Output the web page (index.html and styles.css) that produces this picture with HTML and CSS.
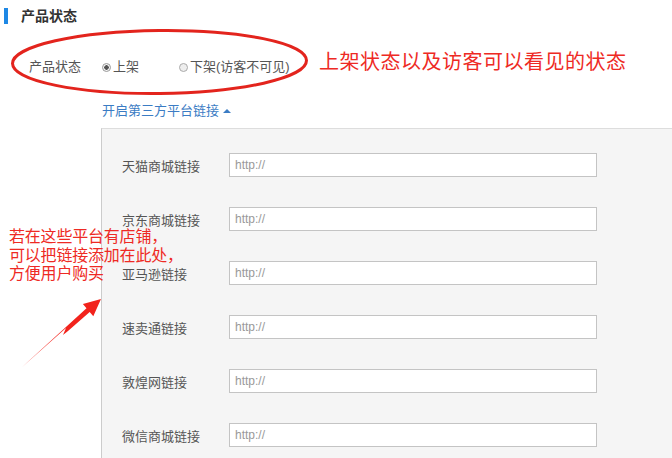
FILE: index.html
```html
<!DOCTYPE html>
<html lang="zh-CN">
<head>
    <meta charset="UTF-8">
    <title>产品状态</title>
    <link rel="stylesheet" href="styles.css">
</head>
<body>
    <div class="page">
        <h2 class="section-title">产品状态</h2>

        <div class="status-row">
            <span class="row-label">产品状态</span>
            <label class="radio"><input type="radio" name="status" checked>上架</label>
            <label class="radio"><input type="radio" name="status">下架(访客不可见)</label>
        </div>

        <a class="toggle" href="#links">开启第三方平台链接 <span class="caret"></span></a>

        <div class="panel" id="links">
            <div class="link-row"><span class="link-label">天猫商城链接</span><input type="text" placeholder="http://"></div>
            <div class="link-row"><span class="link-label">京东商城链接</span><input type="text" placeholder="http://"></div>
            <div class="link-row"><span class="link-label">亚马逊链接</span><input type="text" placeholder="http://"></div>
            <div class="link-row"><span class="link-label">速卖通链接</span><input type="text" placeholder="http://"></div>
            <div class="link-row"><span class="link-label">敦煌网链接</span><input type="text" placeholder="http://"></div>
            <div class="link-row"><span class="link-label">微信商城链接</span><input type="text" placeholder="http://"></div>
        </div>

        <!-- hand-drawn annotations on top of the form -->
        <svg class="marks" width="672" height="458" viewBox="0 0 672 458">
            <ellipse cx="159.5" cy="62" rx="147" ry="31.5" fill="none" stroke="#e3241d" stroke-width="3" transform="rotate(-0.6 159.5 62)"/>
            <polygon fill="#f2231c" points="21,368 86.5,308.2 82.9,304 101,299 93.3,316.2 89.7,312 68,331 63,335 66,328"/>
        </svg>
        <p class="note note-top">上架状态以及访客可以看见的状态</p>
        <p class="note note-left">若在这些平台有店铺，<br>可以把链接添加在此处，<br>方便用户购买</p>
    </div>
</body>
</html>
```

FILE: styles.css
```css
html, body {
    margin: 0;
    padding: 0;
    background: white;
    overflow: hidden;
}
body {
    font-family: "Liberation Sans", "Noto Sans CJK SC", sans-serif;
    color: #555;
    font-size: 13px;
}
.page {
    position: relative;
    height: 450px;
    padding-top: 8px;
}
.section-title {
    margin: 0 0 0 4px;
    padding-left: 13px;
    border-left: 4px solid #1e88e5;
    height: 16px;
    line-height: 16px;
    font-size: 14px;
    font-weight: bold;
    color: #333;
}
.status-row {
    display: flex;
    align-items: center;
    height: 20px;
    margin-top: 33px;
    padding-left: 29px;
    line-height: 20px;
}
.row-label {
    width: 73px;
}
.radio {
    display: flex;
    align-items: center;
    margin-right: 40px;
}
.radio input {
    appearance: none;
    width: 9px;
    height: 9px;
    margin: 0 2px 0 0;
    border: 1px solid #aaa;
    border-radius: 50%;
    background: #eee;
    box-sizing: border-box;
}
.radio input:checked {
    background: radial-gradient(circle, #555 0 2px, #f4f4f4 2.5px);
    border-color: #999;
}
.toggle {
    display: inline-flex;
    align-items: center;
    margin: 26px 0 0 102px;
    height: 16px;
    line-height: 16px;
    color: #3b7cc4;
    text-decoration: none;
}
.caret {
    display: inline-block;
    margin-left: 4px;
    width: 0;
    height: 0;
    border-left: 4px solid transparent;
    border-right: 4px solid transparent;
    border-bottom: 4px solid #3b7cc4;
}
.panel {
    margin: 9px 0 0 101px;
    padding: 24px 0 0 20px;
    border-top: 1px solid #ddd;
    border-left: 1px solid #ccc;
    background: #f5f5f5;
    height: 400px;
}
.link-row {
    display: flex;
    align-items: center;
    height: 24px;
    margin-bottom: 30px;
}
.link-label {
    width: 107px;
    color: #555;
}
.link-row input {
    width: 368px;
    height: 24px;
    box-sizing: border-box;
    border: 1px solid #c4c4c4;
    background: white;
    padding: 0 5px;
    font-family: "Liberation Sans", sans-serif;
    font-size: 12px;
    outline: none;
}
.link-row input::placeholder {
    color: #999;
}
.marks {
    position: absolute;
    left: 0;
    top: 0;
    pointer-events: none;
}
.note {
    position: absolute;
    margin: 0;
    color: #ee2a24;
    font-family: "Noto Sans CJK SC", sans-serif;
}
.note-top {
    left: 319px;
    top: 48px;
    font-size: 20px;
    line-height: 26px;
    letter-spacing: 0.5px;
}
.note-left {
    left: 9px;
    top: 228px;
    font-family: "Liberation Sans", "Noto Sans CJK SC", sans-serif;
    font-size: 16px;
    line-height: 18.5px;
    letter-spacing: -0.2px;
}
```
